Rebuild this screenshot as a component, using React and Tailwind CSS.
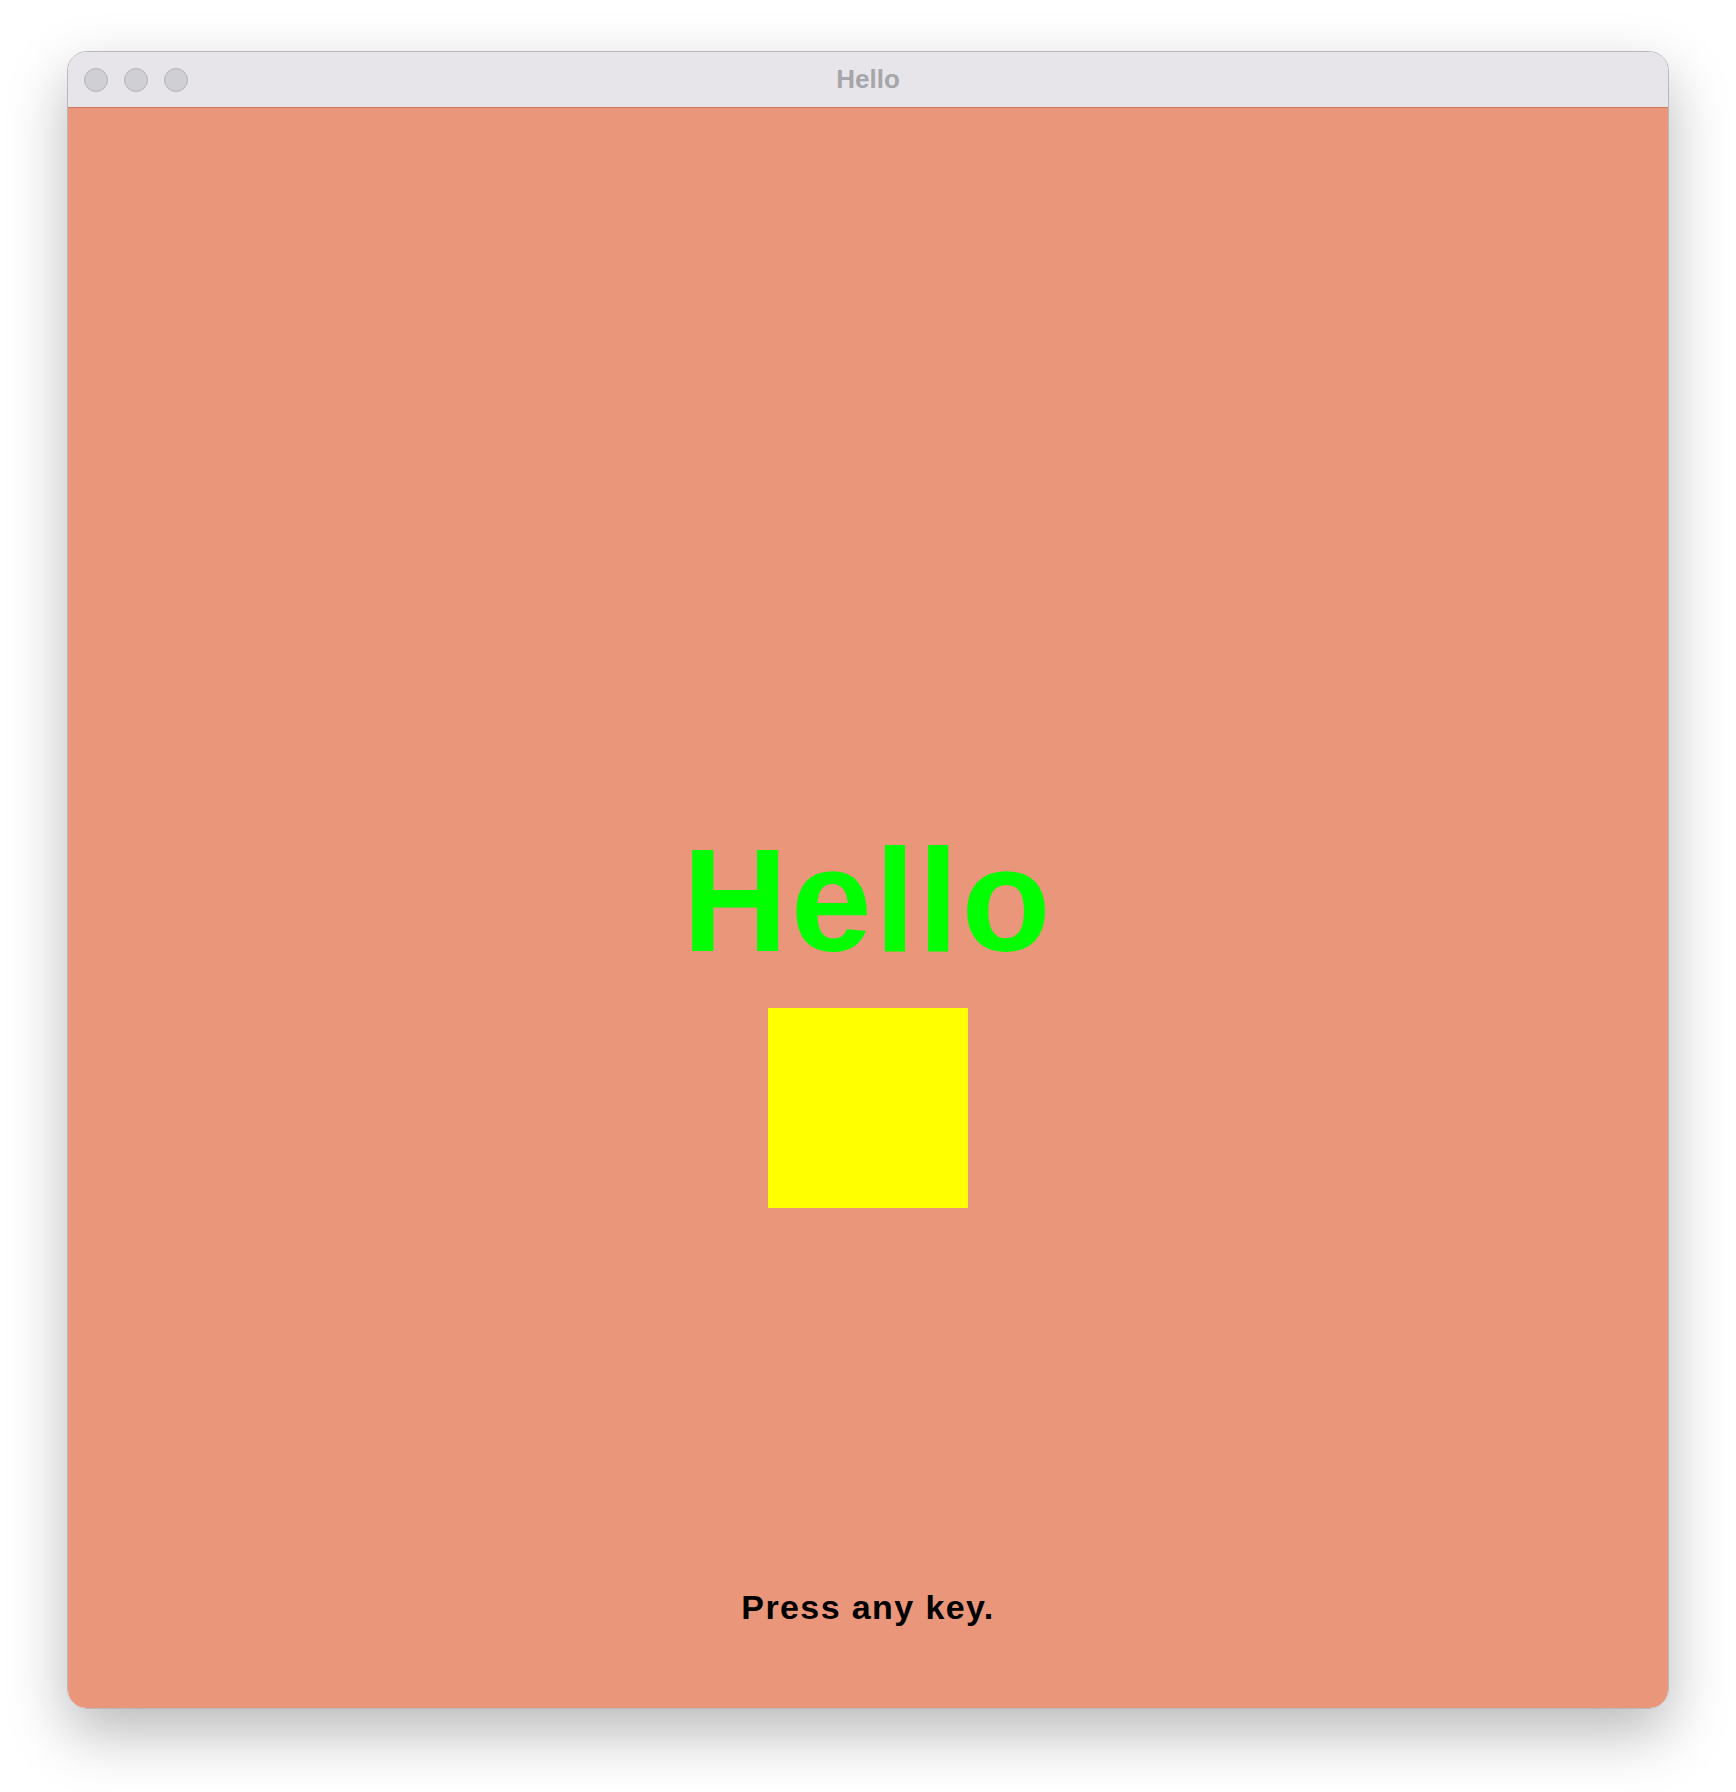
import React from "react";

const TrafficLight = () => (
  <div className="w-[24px] h-[24px] rounded-full bg-[#d0cfd4] border border-[#b4b3b8]" />
);

const App = () => {
  return (
    <div className="w-[1736px] h-[1792px] bg-white pt-[51px] pl-[67px] font-['Liberation_Sans',Arial,sans-serif]">
      <div className="w-[1602px] rounded-[20px] border border-[#b9b8bc] overflow-hidden shadow-[0_24px_60px_rgba(0,0,0,0.28)]">
        {/* Title bar */}
        <div className="relative h-[56px] bg-[#e7e5ea] border-b border-[#cd7a61] flex items-center">
          <div className="flex items-center gap-[16px] pl-[16px]">
            <TrafficLight />
            <TrafficLight />
            <TrafficLight />
          </div>
          <div className="absolute inset-0 flex items-center justify-center">
            <span className="text-[26px] font-bold text-[#a6a5aa]">Hello</span>
          </div>
        </div>

        {/* Content */}
        <div className="w-[1600px] h-[1600px] bg-[#e9967a] flex flex-col items-center pt-[720px]">
          <h1 className="text-[146px] leading-none font-bold tracking-[2.8px] text-[#00ff00]">Hello</h1>
          <div className="mt-[34px] w-[200px] h-[200px] bg-[#ffff00]" />
          <p className="mt-[382px] text-[34px] leading-none font-bold tracking-[1.4px] text-black">
            Press any key.
          </p>
        </div>
      </div>
    </div>
  );
};

export default App;
